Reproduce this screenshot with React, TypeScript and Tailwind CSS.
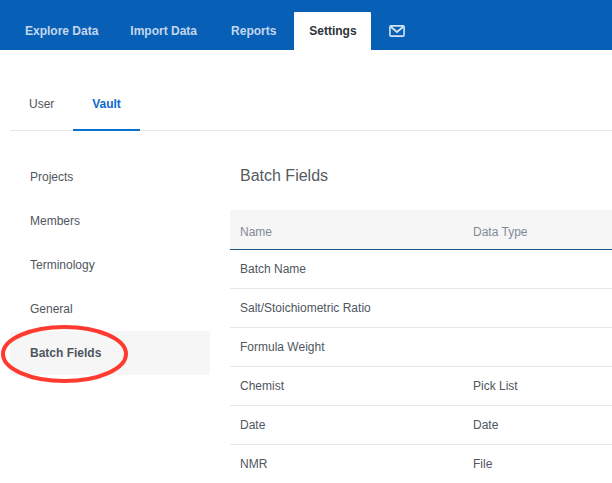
import React from 'react';

const navItems = ['Explore Data', 'Import Data', 'Reports'];
const sideItems = ['Projects', 'Members', 'Terminology', 'General'];
const rows = [
  ['Batch Name', ''],
  ['Salt/Stoichiometric Ratio', ''],
  ['Formula Weight', ''],
  ['Chemist', 'Pick List'],
  ['Date', 'Date'],
  ['NMR', 'File'],
];

export default function App() {
  return (
    <div className="relative w-[612px] h-[483px] overflow-hidden bg-white font-['Liberation_Sans',Arial,sans-serif] text-[#4f5660]">
      <header className="h-[50px] bg-[#0860b6] flex items-end pl-[9px]">
        {navItems.map((item) => (
          <div key={item} className="h-[38px] px-4 first:pr-[16px] nth-2:pr-[18px] flex items-center text-xs font-bold text-[#c4d7ee]">
            {item}
          </div>
        ))}
        <div className="h-[38px] w-[77px] ml-[2px] bg-white rounded-t-[1px] flex items-center justify-center text-xs font-bold text-[#2f3338]">
          Settings
        </div>
        <div className="h-[38px] ml-[18px] flex items-center">
          <svg width="16" height="12" viewBox="0 0 16 12" fill="none" stroke="#d5e3f4">
            <rect x="0.9" y="0.9" width="14.2" height="10.2" rx="1" strokeWidth="1.6" fill="none" />
            <path d="M1.5 1.5 L8 7 L14.5 1.5" strokeWidth="1.8" />
          </svg>
        </div>
      </header>

      <div className="ml-[10px] mt-[35px] h-[46px] border-b border-[#e6e6e6] flex items-start text-xs">
        <div className="w-[63px] pl-[19px] pt-[11px]">User</div>
        <div className="w-[67px] h-[46px] border-b-2 border-[#0a6fd0] text-center pt-[11px] font-bold text-[#0a6acb]">
          Vault
        </div>
      </div>

      <div className="flex mt-[24px] ml-[10px]">
        <nav className="w-[200px] shrink-0 text-xs">
          {sideItems.map((item) => (
            <div key={item} className="h-[44px] flex items-center pl-[20px]">
              {item}
            </div>
          ))}
          <div className="h-[44px] flex items-center pl-[20px] bg-[#f6f6f6] rounded-[2px] font-bold">
            Batch Fields
          </div>
        </nav>

        <main className="ml-[20px] flex-1">
          <h2 className="h-[55px] pl-[10px] pt-[11px] text-base leading-[20px] text-[#555a62]">Batch Fields</h2>
          <div className="h-[40px] bg-[#f6f6f6] border-b border-[#24578f] flex items-center pt-[4px] text-xs text-[#828a96]">
            <div className="w-[243px] pl-[10px]">Name</div>
            <div>Data Type</div>
          </div>
          {rows.map(([name, type]) => (
            <div key={name} className="h-[39px] border-b border-[#e6e6e6] flex items-center text-xs">
              <div className="w-[243px] pl-[10px]">{name}</div>
              <div>{type}</div>
            </div>
          ))}
        </main>
      </div>

      {/* red hand-drawn annotation */}
      <svg className="absolute left-0 top-[322px]" width="132" height="64" viewBox="0 0 132 64" fill="none">
        <ellipse cx="64.5" cy="32" rx="61.5" ry="27" stroke="#ff3b30" strokeWidth="4" />
      </svg>
    </div>
  );
}
